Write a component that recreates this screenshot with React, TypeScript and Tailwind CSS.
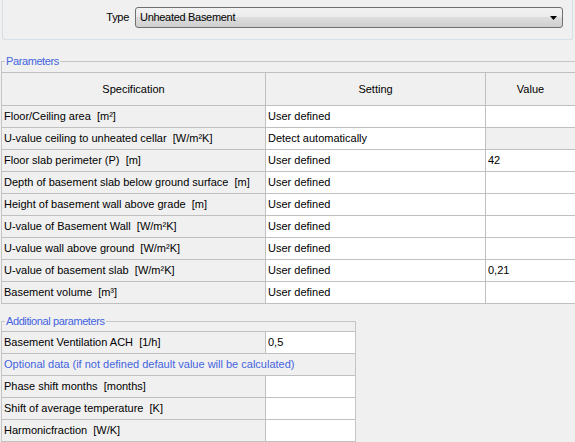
import React from "react";

type Row = { spec: string; setting: string; value?: string; locked?: boolean };

const params: Row[] = [
  { spec: "Floor/Ceiling area  [m²]", setting: "User defined" },
  { spec: "U-value ceiling to unheated cellar  [W/m²K]", setting: "Detect automatically", locked: true },
  { spec: "Floor slab perimeter (P)  [m]", setting: "User defined", value: "42" },
  { spec: "Depth of basement slab below ground surface  [m]", setting: "User defined" },
  { spec: "Height of basement wall above grade  [m]", setting: "User defined" },
  { spec: "U-value of Basement Wall  [W/m²K]", setting: "User defined" },
  { spec: "U-value wall above ground  [W/m²K]", setting: "User defined" },
  { spec: "U-value of basement slab  [W/m²K]", setting: "User defined", value: "0,21" },
  { spec: "Basement volume  [m³]", setting: "User defined" },
];

const optional = [
  "Phase shift months  [months]",
  "Shift of average temperature  [K]",
  "Harmonicfraction  [W/K]",
];

export default function App() {
  return (
    <div className="w-[575px] h-[442px] overflow-hidden bg-[#f0f0f0] font-['Liberation_Sans',Arial,sans-serif] text-[11px] text-black">
      {/* Type selector panel */}
      <div className="mx-[2px] h-[40px] border-x border-b border-[#d5dfe5] rounded-b-[3px] flex items-start pt-[7px]">
        <span className="w-[126px] text-right leading-[21px] tracking-[-0.3px]">Type</span>
        <div className="ml-[6px] w-[428px] h-[21px] border border-[#707070] rounded-[3px] bg-[linear-gradient(to_bottom,#f2f2f2_0%,#ebebeb_50%,#dddddd_50%,#cfcfcf_100%)] flex items-center pl-[4px] pr-[4px]">
          <span className="flex-1 tracking-[-0.3px]">Unheated Basement</span>
          <svg width="7" height="4" viewBox="0 0 7 4" className="mr-[1px]">
            <path d="M0 0h7L3.5 4z" fill="#000" />
          </svg>
        </div>
      </div>

      {/* Parameters */}
      <fieldset className="ml-[1px] mt-[14px] border-t border-l border-[#c5c5c5] min-w-0">
        <legend className="ml-[3px] px-[1px] leading-[14px] text-[#4464e0] tracking-[-0.4px]">Parameters</legend>
        <div className="pt-[4px]">
          <div className="flex h-[34px] border-y border-[#c0c0c0]">
            <div className="w-[264px] border-r border-[#c0c0c0] flex items-center justify-center">Specification</div>
            <div className="w-[220px] border-r border-[#c0c0c0] flex items-center justify-center">Setting</div>
            <div className="flex-1 flex items-center justify-center">Value</div>
          </div>
          {params.map((r) => (
            <div key={r.spec} className="flex h-[22px] border-b border-[#c0c0c0]">
              <div className="w-[264px] border-r border-[#c0c0c0] flex items-center pl-[2px] whitespace-pre">{r.spec}</div>
              <div className="w-[220px] border-r border-[#c0c0c0] bg-white flex items-center pl-[2px]">{r.setting}</div>
              <div className={`flex-1 flex items-center pl-[2px] ${r.locked ? "" : "bg-white"}`}>{r.value}</div>
            </div>
          ))}
        </div>
      </fieldset>

      {/* Additional parameters */}
      <fieldset className="ml-[1px] mt-[10px] w-[355px] border-t border-x border-[#c5c5c5] min-w-0">
        <legend className="ml-[3px] px-[1px] leading-[14px] text-[#4464e0] tracking-[-0.4px]">Additional parameters</legend>
        <div className="pt-[3px]">
          <div className="border-t border-[#c0c0c0]">
            <div className="flex h-[22px] border-b border-[#c0c0c0]">
              <div className="w-[264px] border-r border-[#c0c0c0] flex items-center pl-[2px] whitespace-pre">Basement Ventilation ACH  [1/h]</div>
              <div className="flex-1 bg-white flex items-center pl-[2px]">0,5</div>
            </div>
            <div className="flex h-[22px] border-b border-[#c0c0c0] items-center pl-[2px] text-[#4464e0]">
              Optional data (if not defined default value will be calculated)
            </div>
            {optional.map((s) => (
              <div key={s} className="flex h-[22px] border-b border-[#c0c0c0]">
                <div className="w-[264px] border-r border-[#c0c0c0] flex items-center pl-[2px] whitespace-pre">{s}</div>
                <div className="flex-1 bg-white" />
              </div>
            ))}
          </div>
        </div>
      </fieldset>
    </div>
  );
}
